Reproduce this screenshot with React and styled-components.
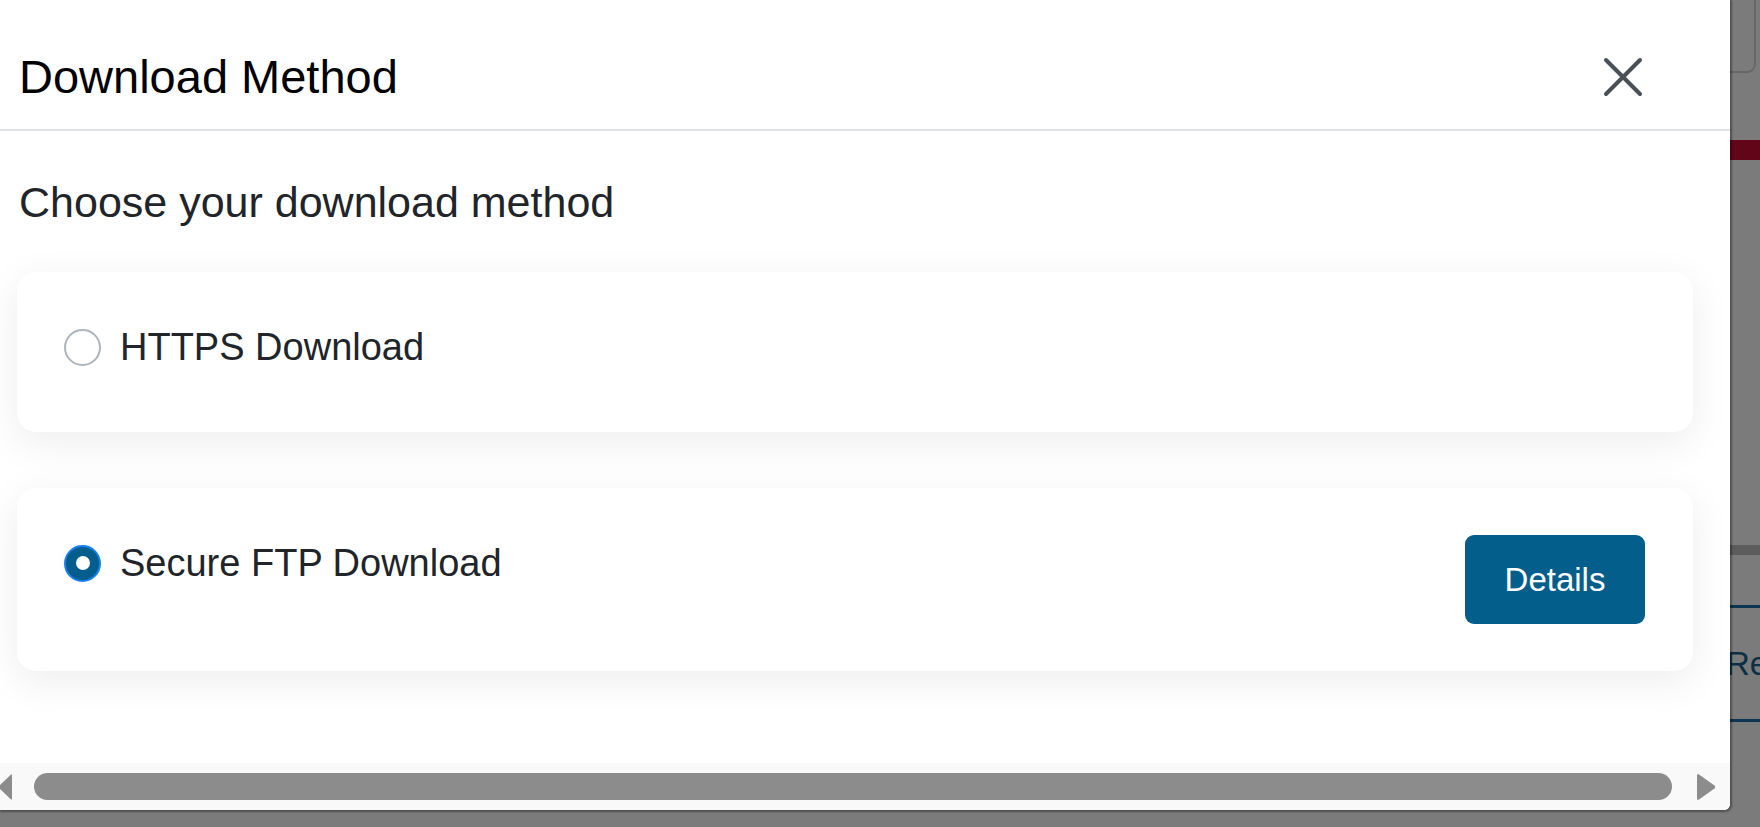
import React, { useState } from 'react';
import styled, { createGlobalStyle } from 'styled-components';

/* Reset halaman dan latar belakang abu-abu dari overlay */
const GlobalStyle = createGlobalStyle`
  html, body {
    margin: 0;
    padding: 0;
    background: #7b7b7b;
    overflow: hidden;
  }
  body {
    font-family: "Liberation Sans", Arial, sans-serif;
  }
`;

const Page = styled.div`
  display: flex;
  width: 1760px;
  height: 827px;
`;

/* Panel modal utama */
const Modal = styled.div`
  width: 1730px;
  height: 810px;
  flex-shrink: 0;
  background: #fff;
  border-bottom-right-radius: 6px;
  box-shadow: 1px 1px 2px 1px rgba(0, 0, 0, 0.35);
  display: flex;
  flex-direction: column;
  overflow: hidden;
  position: relative;
  z-index: 1;
`;

const Header = styled.div`
  display: flex;
  align-items: center;
  justify-content: space-between;
  padding: 49px 86px 24px 19px;
  border-bottom: 2px solid #dee2e6;
`;

const Title = styled.h1`
  margin: 0;
  font-size: 47px;
  font-weight: 400;
  line-height: 56px;
  color: #000;
`;

const CloseButton = styled.button`
  width: 42px;
  height: 42px;
  padding: 0;
  border: none;
  background: transparent;
  display: flex;
  align-items: center;
  justify-content: center;
  cursor: pointer;
`;

const Body = styled.div`
  flex: 1;
  display: flex;
  flex-direction: column;
  padding: 45px 37px 0 17px;
`;

const Subtitle = styled.p`
  margin: 0 0 44px 2px;
  font-size: 43px;
  line-height: 52px;
  color: #212529;
`;

const CardList = styled.div`
  display: flex;
  flex-direction: column;
  gap: 56px;
`;

/* Kartu pilihan metode */
const Card = styled.div`
  display: flex;
  align-items: flex-start;
  justify-content: space-between;
  padding: 47px 48px 47px 47px;
  background: #fff;
  border-radius: 19px;
  box-shadow: 0 10px 40px rgba(0, 0, 0, 0.075);
`;

const OptionLabel = styled.label`
  display: flex;
  align-items: center;
  gap: 19px;
  height: 56px;
  margin-bottom: 10px;
  font-size: 38px;
  color: #212529;
  cursor: pointer;
`;

const Radio = styled.span`
  width: 37px;
  height: 37px;
  box-sizing: border-box;
  border-radius: 50%;
  flex-shrink: 0;
  display: flex;
  align-items: center;
  justify-content: center;
  border: 2px solid ${(p) => (p.$checked ? '#1a7ff0' : '#adb5bd')};
  background: ${(p) => (p.$checked ? '#035e8c' : '#fff')};

  &::after {
    content: "";
    display: ${(p) => (p.$checked ? 'block' : 'none')};
    width: 14px;
    height: 14px;
    border-radius: 50%;
    background: #fff;
  }
`;

const DetailsButton = styled.button`
  width: 180px;
  height: 89px;
  border: none;
  border-radius: 9px;
  background: #035e8c;
  color: #fff;
  font-family: inherit;
  font-size: 33px;
  cursor: pointer;
`;

/* Scrollbar horizontal gaya Windows */
const ScrollBar = styled.div`
  height: 47px;
  flex-shrink: 0;
  background: #f9f9f9;
  display: flex;
  align-items: center;
  gap: 22px;
  padding-right: 14px;
`;

const Thumb = styled.div`
  flex: 1;
  height: 27px;
  border-radius: 14px;
  background: #8c8c8c;
  margin-right: 2px;
`;

/* Potongan halaman di belakang overlay */
const Backdrop = styled.div`
  flex: 1;
  display: flex;
  flex-direction: column;
  overflow: hidden;
`;

const Outline = styled.div`
  height: 71px;
  width: 24px;
  border: 2px solid #676767;
  border-top: none;
  border-left: none;
  border-bottom-right-radius: 9px;
`;

const Strip = styled.div`
  height: ${(p) => p.$h}px;
  margin-top: ${(p) => p.$top}px;
  background: ${(p) => p.$color};
`;

const GhostText = styled.div`
  margin-top: 36px;
  margin-left: -4px;
  font-size: 33px;
  line-height: 40px;
  color: #0b2f45;
  white-space: nowrap;
`;

const LeftArrow = () => (
  <svg width="12" height="28" viewBox="0 0 12 28">
    <path d="M11 1.5 L-2 14 L11 26.5 Q12 27.5 12 25 L12 3 Q12 0.5 11 1.5 Z" fill="#8c8c8c" />
  </svg>
);

const RightArrow = () => (
  <svg width="20" height="28" viewBox="0 0 20 28">
    <path d="M3 1.5 L18.5 12.5 Q20 14 18.5 15.5 L3 26.5 Q1 27.8 1 25 L1 3 Q1 0.2 3 1.5 Z" fill="#8c8c8c" />
  </svg>
);

const options = [
  { id: 'https', label: 'HTTPS Download' },
  { id: 'sftp', label: 'Secure FTP Download', details: true },
];

const App = () => {
  const [method, setMethod] = useState('sftp');

  return (
    <Page>
      <GlobalStyle />
      <Modal>
        <Header>
          <Title>Download Method</Title>
          <CloseButton aria-label="Close">
            <svg width="40" height="40" viewBox="0 0 40 40">
              <path d="M3 3 L37 37 M37 3 L3 37" stroke="#495057" strokeWidth="4" strokeLinecap="round" />
            </svg>
          </CloseButton>
        </Header>
        <Body>
          <Subtitle>Choose your download method</Subtitle>
          <CardList>
            {options.map((o) => (
              <Card key={o.id}>
                <OptionLabel onClick={() => setMethod(o.id)}>
                  <Radio $checked={method === o.id} />
                  {o.label}
                </OptionLabel>
                {o.details && <DetailsButton>Details</DetailsButton>}
              </Card>
            ))}
          </CardList>
        </Body>
        <ScrollBar>
          <LeftArrow />
          <Thumb />
          <RightArrow />
        </ScrollBar>
      </Modal>
      <Backdrop>
        <Outline />
        <Strip $h={20} $top={67} $color="#620518" />
        <Strip $h={10} $top={385} $color="#5c5c5c" />
        <Strip $h={3} $top={50} $color="#0b3550" />
        <GhostText>Re</GhostText>
        <Strip $h={3} $top={35} $color="#0b3550" />
      </Backdrop>
    </Page>
  );
};

export default App;
